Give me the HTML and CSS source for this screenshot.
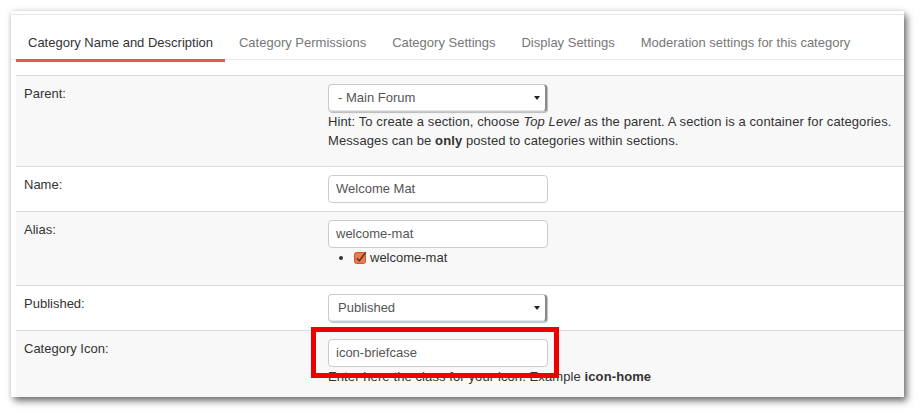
FILE: index.html
```html
<!DOCTYPE html>
<html>
<head>
<meta charset="utf-8">
<link rel="stylesheet" href="styles.css">
</head>
<body>
<div class="panel">
  <div class="nav">
    <div class="tab active">Category Name and Description</div>
    <div class="tab">Category Permissions</div>
    <div class="tab">Category Settings</div>
    <div class="tab">Display Settings</div>
    <div class="tab">Moderation settings for this category</div>
  </div>
  <table class="form">
    <tr class="odd">
      <td class="label">Parent:</td>
      <td class="field">
        <div class="select">- Main Forum</div>
        <p class="hint hint-parent">Hint: To create a section, choose <em>Top Level</em> as the parent. A section is a container for categories.<br>Messages can be <b>only</b> posted to categories within sections.</p>
      </td>
    </tr>
    <tr>
      <td class="label">Name:</td>
      <td class="field"><div class="input">Welcome Mat</div></td>
    </tr>
    <tr class="odd">
      <td class="label">Alias:</td>
      <td class="field">
        <div class="input">welcome-mat</div>
        <ul class="alias-list">
          <li><svg class="check" width="13" height="13" viewBox="0 0 13 13"><rect x="0.5" y="1.5" width="11" height="11" rx="2" fill="#ec7a4a" stroke="#c9582c"/><path d="M2.8 7.2 L5.4 9.8 L11.8 1.2" fill="none" stroke="#5a3a30" stroke-width="1.6"/></svg>welcome-mat</li>
        </ul>
      </td>
    </tr>
    <tr>
      <td class="label">Published:</td>
      <td class="field"><div class="select">Published</div></td>
    </tr>
    <tr class="odd last">
      <td class="label">Category Icon:</td>
      <td class="field">
        <div class="icon-wrap">
          <div class="input">icon-briefcase</div>
          <div class="highlight"></div>
        </div>
        <p class="hint">Enter here the class for your icon. Example <b>icon-home</b></p>
      </td>
    </tr>
  </table>
</div>
</body>
</html>
```
FILE: styles.css
```css
html, body {
  margin: 0;
  padding: 0;
  background: #fff;
}
body {
  font-family: "Liberation Sans", Arial, sans-serif;
  font-size: 13px;
  color: #333;
}
.panel {
  margin: 11px 19px 20px 11px;
  width: 893px;
  background: #fff;
  padding: 3px 0 0 0;
  box-shadow: 3px 4px 7px rgba(0,0,0,0.55), 0 0 5px rgba(0,0,0,0.12);
}
.nav {
  display: flex;
  border-top: 1px solid #e6e6e6;
  border-bottom: 1px solid #ececec;
  padding-left: 5px;
  height: 44px;
}
.tab {
  padding: 18px 12px 6px;
  line-height: 20px;
  margin-right: 2px;
  color: #777;
  border-bottom: 3px solid transparent;
  height: 20px;
}
.tab.active {
  color: #333;
  border-bottom-color: #f0525b;
}
.form {
  margin: 15px 0 0 5px;
  width: 888px;
  border-collapse: collapse;
  border-top: 1px solid #dcdcdc;
}
.form td {
  padding: 8px;
  line-height: 20px;
  vertical-align: top;
  border-bottom: 1px solid #dcdcdc;
}
.form tr.last td { border-bottom: none; padding-bottom: 11px; }
.form tr.odd td { background: #f8f8f8; }
.form td.label { width: 288px; color: #333; }
.select, .input {
  box-sizing: border-box;
  height: 28px;
  line-height: 26px;
  border: 1px solid #ccc;
  border-radius: 4px;
  background: #fff;
  color: #555;
}
.input {
  width: 220px;
  padding: 0 7px;
}
.select {
  width: 219px;
  padding: 0 9px;
  border-right: 2px solid #8a8a8a;
  box-shadow: inset 0 -1px 0 #e6e6e6, 1px 1px 1px rgba(0,0,0,0.25);
  background: #fff url("data:image/svg+xml;utf8,<svg xmlns='http://www.w3.org/2000/svg' width='6' height='4'><path d='M0 0 L6 0 L3 4 Z' fill='%23222'/></svg>") no-repeat right 5px center;
}
.hint {
  margin: 0;
  line-height: 19px;
  color: #333;
  letter-spacing: 0.1px;
}
.hint-parent { margin-bottom: 8px; }
.alias-list {
  margin: 0 0 9px 25px;
  padding: 0;
  line-height: 20px;
  list-style: disc;
}
.alias-list li {
  margin-left: 1px;
  color: #333;
}
.check {
  vertical-align: -2px;
  margin-right: 3px;
}
.icon-wrap {
  position: relative;
  width: 220px;
}
.highlight {
  position: absolute;
  left: -17px;
  top: -12px;
  width: 248px;
  height: 51px;
  box-sizing: border-box;
  border: 5px solid #ee0000;
}
```
